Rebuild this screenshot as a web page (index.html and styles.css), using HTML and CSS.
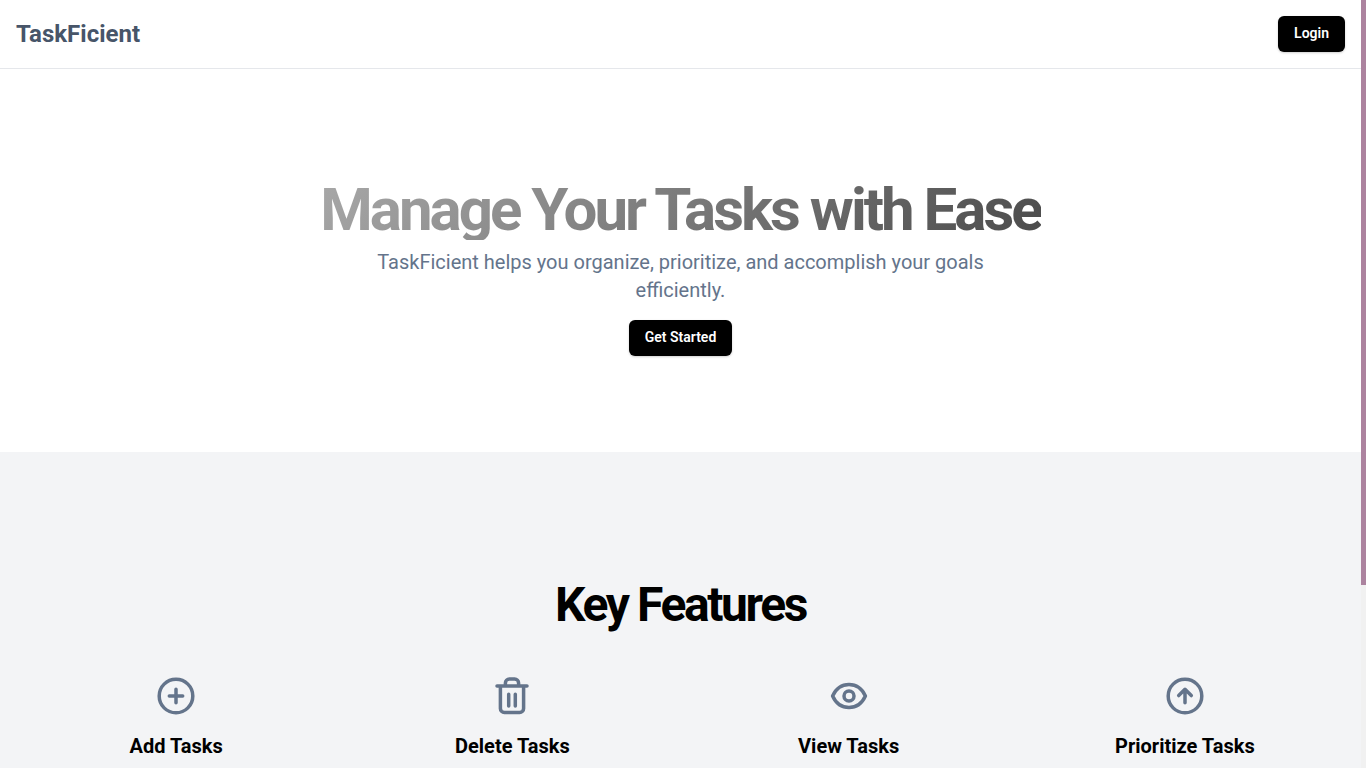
FILE: index.html
```html
<!DOCTYPE html>
<html lang="en">
<head>
<meta charset="utf-8">
<meta name="viewport" content="width=device-width, initial-scale=1">
<title>TaskFicient</title>
<link rel="stylesheet" href="styles.css">
</head>
<body>
<div class="shell">
  <div class="page">
    <header class="header">
      <a class="brand" href="#">TaskFicient</a>
      <button class="button" type="button">Login</button>
    </header>
    <main>
      <section class="hero">
        <h1 class="hero-title">Manage Your Tasks with Ease</h1>
        <p class="hero-text">TaskFicient helps you organize, prioritize, and accomplish your goals efficiently.</p>
        <button class="button" type="button">Get Started</button>
      </section>
      <section class="features">
        <h2 class="features-title">Key Features</h2>
        <div class="feature-grid">
          <article class="feature">
            <svg class="icon" viewBox="0 0 48 48" aria-hidden="true"><circle cx="24" cy="24" r="16.800"/><path d="M24 17.300v13.400M17.300 24h13.400"/></svg>
            <h3 class="feature-name">Add Tasks</h3>
          </article>
          <article class="feature">
            <svg class="icon" viewBox="0 0 48 48" aria-hidden="true"><path d="M9 14h30M12.400 14v22.500a4 4 0 0 0 4 4h15.200a4 4 0 0 0 4-4V14M17.400 14v-3a4 4 0 0 1 4-4h5.200a4 4 0 0 1 4 4v3M20.700 22.200V34M27.300 22.200V34"/></svg>
            <h3 class="feature-name">Delete Tasks</h3>
          </article>
          <article class="feature">
            <svg class="icon" viewBox="0 0 48 48" aria-hidden="true"><path d="M7.600 24C11 16.500 17 12.500 24 12.500S37 16.500 40.400 24C37 31.500 31 35.500 24 35.500S11 31.500 7.600 24Z"/><circle cx="24" cy="24" r="5"/></svg>
            <h3 class="feature-name">View Tasks</h3>
          </article>
          <article class="feature">
            <svg class="icon" viewBox="0 0 48 48" aria-hidden="true"><circle cx="24" cy="24" r="16.800"/><path d="M24 30.700V17.500M17.700 23.600 24 17.300l6.300 6.300"/></svg>
            <h3 class="feature-name">Prioritize Tasks</h3>
          </article>
        </div>
      </section>
    </main>
  </div>
  <div class="scroll-track" aria-hidden="true"><div class="scroll-thumb"></div></div>
</div>
</body>
</html>
```
FILE: styles.css
```css
* {
  box-sizing: border-box;
  margin: 0;
}

body {
  font-family: Roboto, "Liberation Sans", sans-serif;
  color: #000;
  background: #fff;
}

.shell {
  display: grid;
  grid-template-columns: 1fr 5px;
  height: 100vh;
  overflow: hidden;
}

.page {
  display: flex;
  flex-direction: column;
  min-width: 0;
  min-height: 0;
}

main {
  display: flex;
  flex-direction: column;
  flex: 1;
}

.header {
  display: flex;
  align-items: center;
  justify-content: space-between;
  padding: 16px;
  border-bottom: 1px solid #e5e7eb;
}

.brand {
  font-size: 24px;
  line-height: 32px;
  font-weight: 700;
  color: #475569;
  text-decoration: none;
}

.button {
  height: 36px;
  padding: 0 16px 2px;
  border: 0;
  border-radius: 6px;
  background: #000;
  color: #fff;
  font-family: inherit;
  font-size: 14px;
  line-height: 20px;
  font-weight: 600;
  box-shadow: 0 1px 3px rgb(0 0 0 / 10%), 0 1px 2px rgb(0 0 0 / 10%);
}

.hero {
  display: flex;
  flex-direction: column;
  align-items: center;
  padding: 111px 16px 96px;
  text-align: center;
}

.hero-title {
  font-size: 60px;
  line-height: 60px;
  font-weight: 700;
  letter-spacing: -0.05em;
  color: transparent;
  background: linear-gradient(135deg, #a8a8a8, #4b4b4b);
  background-clip: text;
}

.hero-text {
  max-width: 672px;
  margin: 8px 0 16px;
  font-size: 20px;
  line-height: 28px;
  color: #64748b;
}

.features {
  flex: 1;
  padding: 129px 16px 0;
  background: #f3f4f6;
}

.features-title {
  margin-bottom: 43px;
  font-size: 48px;
  line-height: 48px;
  font-weight: 700;
  letter-spacing: -0.05em;
  text-align: center;
}

.feature-grid {
  display: grid;
  grid-template-columns: repeat(4, 1fr);
  gap: 16px;
}

.feature {
  display: flex;
  flex-direction: column;
  align-items: center;
  gap: 12px;
}

.icon {
  width: 48px;
  height: 48px;
  fill: none;
  stroke: #64748b;
  stroke-width: 3.5;
  stroke-linecap: round;
  stroke-linejoin: round;
}

.feature-name {
  font-size: 20px;
  line-height: 28px;
  font-weight: 700;
}

.scroll-track {
  background: #f1f1f1;
}

.scroll-thumb {
  height: 76.2%;
  background: #ac839f;
}
```
